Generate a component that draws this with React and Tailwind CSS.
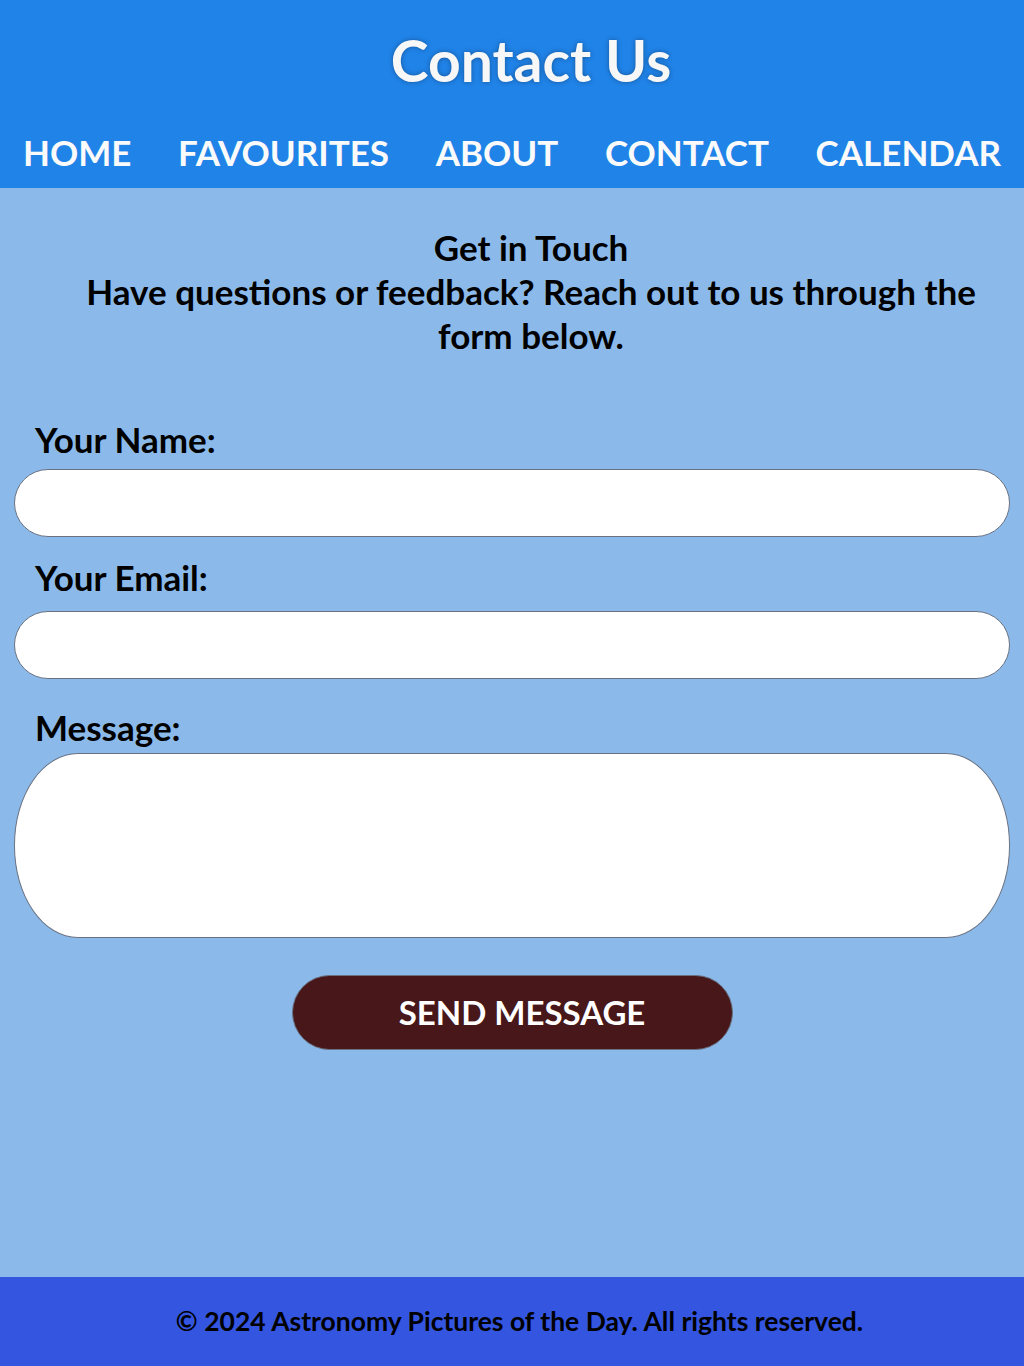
import { useState } from "react";

const font = { fontFamily: "Lato, 'Open Sans', sans-serif" };

const navItems = ["HOME", "FAVOURITES", "ABOUT", "CONTACT", "CALENDAR"];

const App = () => {
  const [form, setForm] = useState({ name: "", email: "", message: "" });

  const update = (key) => (e) => setForm({ ...form, [key]: e.target.value });

  return (
    <div className="min-h-screen flex flex-col bg-[#8bbaea] text-black" style={font}>
      <header className="bg-[#2083e8]">
        <h1 className="text-center text-[57px] font-bold text-[#f7f7f7] leading-none pt-[32px] pb-[28px] pl-[38px] [text-shadow:0_0_5px_rgba(0,0,0,0.35)]">
          Contact Us
        </h1>
        <nav className="flex justify-between items-center px-[23px] h-[71px]">
          {navItems.map((item) => (
            <a key={item} href="#" className="text-[#fafafa] text-[35px] font-bold leading-none">
              {item}
            </a>
          ))}
        </nav>
      </header>

      <main className="flex-1">
        <section className="text-center pt-[37px] pl-[58px] pr-[20px]">
          <h2 className="text-[35px] font-bold leading-[44px]">Get in Touch</h2>
          <p className="text-[35px] font-bold leading-[44px]">
            Have questions or feedback? Reach out to us through the form below.
          </p>
        </section>

        <form className="px-[14px] pt-[60px]" onSubmit={(e) => e.preventDefault()}>
          <label htmlFor="name" className="block ml-[21px] text-[35px] font-bold leading-[44px] mb-[8px]">
            Your Name:
          </label>
          <input
            id="name"
            value={form.name}
            onChange={update("name")}
            className="block w-full h-[68px] bg-white border border-gray-500 rounded-full px-6 text-2xl"
          />

          <label htmlFor="email" className="block ml-[21px] mt-[18px] text-[35px] font-bold leading-[44px] mb-[12px]">
            Your Email:
          </label>
          <input
            id="email"
            type="email"
            value={form.email}
            onChange={update("email")}
            className="block w-full h-[68px] bg-white border border-gray-500 rounded-full px-6 text-2xl"
          />

          <label htmlFor="message" className="block ml-[21px] mt-[26px] text-[35px] font-bold leading-[44px] mb-[4px]">
            Message:
          </label>
          <textarea
            id="message"
            value={form.message}
            onChange={update("message")}
            className="block w-full h-[185px] bg-white border border-gray-500 rounded-[64px/92px] px-10 py-6 text-2xl resize-none"
          />

          <div className="flex justify-center pt-[37px]">
            <button
              type="submit"
              className="w-[441px] h-[75px] rounded-full bg-[#471719] border border-gray-500 text-white text-[33px] font-bold pl-[20px]"
            >
              SEND MESSAGE
            </button>
          </div>
        </form>
      </main>

      <footer className="bg-[#3355e0] h-[89px] flex items-center justify-center pl-[15px]">
        <p className="text-[26.5px] font-bold">© 2024 Astronomy Pictures of the Day. All rights reserved.</p>
      </footer>
    </div>
  );
};

export default App;
